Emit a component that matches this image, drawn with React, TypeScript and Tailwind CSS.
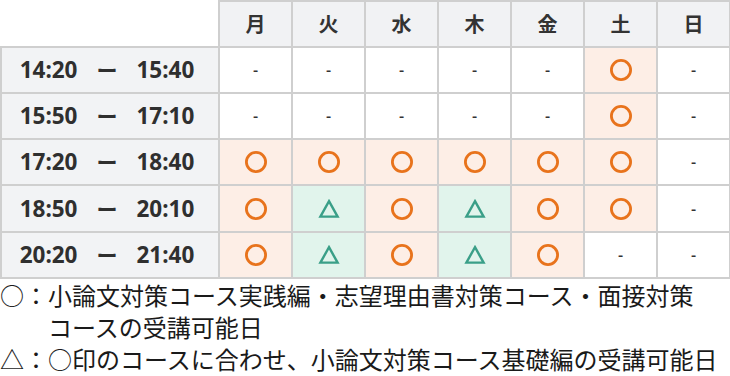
const days = ["月", "火", "水", "木", "金", "土", "日"]

type Mark = "o" | "t" | "-"

const rows: { from: string; to: string; marks: Mark[] }[] = [
  { from: "14:20", to: "15:40", marks: ["-", "-", "-", "-", "-", "o", "-"] },
  { from: "15:50", to: "17:10", marks: ["-", "-", "-", "-", "-", "o", "-"] },
  { from: "17:20", to: "18:40", marks: ["o", "o", "o", "o", "o", "o", "-"] },
  { from: "18:50", to: "20:10", marks: ["o", "t", "o", "t", "o", "o", "-"] },
  { from: "20:20", to: "21:40", marks: ["o", "t", "o", "t", "o", "-", "-"] },
]

function Circle() {
  return (
    <svg width="24" height="24" viewBox="0 0 24 24" className="mx-auto block">
      <circle cx="12" cy="12" r="9.6" fill="none" stroke="#e8731c" strokeWidth="2.8" />
    </svg>
  )
}

function Triangle() {
  return (
    <svg width="22" height="20" viewBox="0 0 22 20" className="mx-auto block">
      <path d="M11 2.2 L19.6 17.6 L2.4 17.6 Z" fill="none" stroke="#3a9f88" strokeWidth="2.4" strokeLinejoin="miter" />
    </svg>
  )
}

function Cell({ mark }: { mark: Mark }) {
  const bg = mark === "o" ? "bg-[#fdeee6]" : mark === "t" ? "bg-[#e1f4ec]" : "bg-white"
  return (
    <td className={`border-2 border-[#cfcfcf] text-center align-middle ${bg}`}>
      {mark === "o" ? <Circle /> : mark === "t" ? <Triangle /> : <span className="text-[16px] font-medium text-[#333]">-</span>}
    </td>
  )
}

export default function App() {
  return (
    <div className="w-[730px] h-[376px] bg-white overflow-hidden font-['Noto_Sans','Noto_Sans_CJK_JP',sans-serif]">
      <table className="table-fixed border-collapse w-[730px]">
        <colgroup>
          <col className="w-[218px]" />
          {days.map((d) => (
            <col key={d} className="w-[73px]" />
          ))}
        </colgroup>
        <thead>
          <tr className="h-[45.5px]">
            <th className="border-0 bg-white" />
            {days.map((d) => (
              <th
                key={d}
                className="border-2 border-[#cfcfcf] bg-[#f1f2f4] text-[20px] font-bold text-[#333] font-['Noto_Sans_CJK_JP',sans-serif]"
              >
                {d}
              </th>
            ))}
          </tr>
        </thead>
        <tbody>
          {rows.map((r) => (
            <tr key={r.from} className="h-[46.3px]">
              <td className="border-2 border-[#cfcfcf] bg-[#f2f3f5]">
                <div className="flex items-center justify-center gap-[19px] pr-[6px] text-[22.5px] font-bold text-[#2f2f2f]">
                  <span>{r.from}</span>
                  <span className="font-['Noto_Sans_CJK_JP',sans-serif] text-[21px]">ー</span>
                  <span>{r.to}</span>
                </div>
              </td>
              {r.marks.map((m, i) => (
                <Cell key={i} mark={m} />
              ))}
            </tr>
          ))}
        </tbody>
      </table>
      <div className="text-[24px] leading-[32px] text-[#1a1a1a] font-['Noto_Sans_CJK_JP',sans-serif]">
        <p className="pl-[48px] -indent-[48px] whitespace-nowrap">
          ○：小論文対策コース実践編・志望理由書対策コース・面接対策
          <br />
          コースの受講可能日
        </p>
        <p className="pl-[48px] -indent-[48px] whitespace-nowrap">△：○印のコースに合わせ、小論文対策コース基礎編の受講可能日</p>
      </div>
    </div>
  )
}
